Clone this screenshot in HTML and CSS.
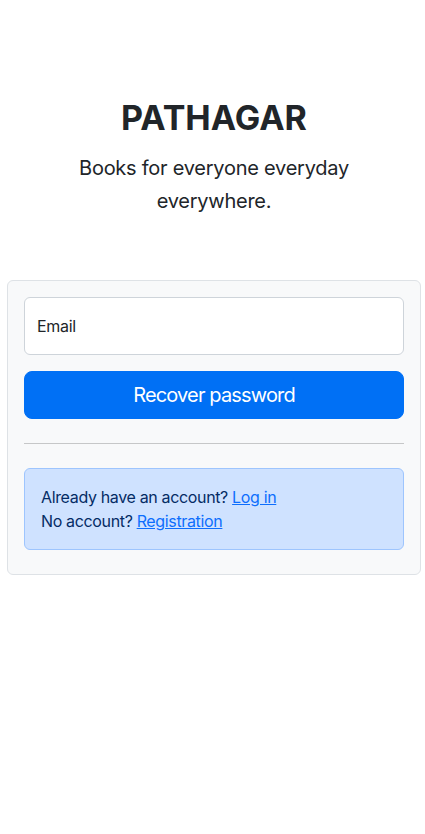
FILE: index.html
```html
<!DOCTYPE html>
<html lang="en">
<head>
<meta charset="utf-8">
<title>Pathagar</title>
<link rel="stylesheet" href="styles.css">
</head>
<body>
<main class="page">
  <header class="hero">
    <h1 class="brand">PATHAGAR</h1>
    <p class="lead">Books for everyone everyday everywhere.</p>
  </header>
  <section class="card">
    <form class="form">
      <label class="field">
        <input class="field-input" type="email" placeholder="Email">
      </label>
      <button class="btn" type="button">Recover password</button>
    </form>
    <hr class="divider">
    <div class="alert">
      <div>Already have an account? <a href="#" class="link">Log in</a></div>
      <div>No account? <a href="#" class="link">Registration</a></div>
    </div>
  </section>
</main>
</body>
</html>
```

FILE: styles.css
```css
* { box-sizing: border-box; }
html, body { margin: 0; padding: 0; background: #fff; }
body {
  font-family: Inter, "Noto Sans", "Liberation Sans", sans-serif;
  font-size: 16px;
  line-height: 1.5;
  color: #212529;
  letter-spacing: -0.35px;
}
.page {
  width: 414px;
  margin-left: 7px;
  padding-top: 98px;
}
.hero {
  text-align: center;
  padding: 0 60px;
}
.brand {
  margin: 0;
  font-size: 34px;
  font-weight: 700;
  line-height: 40px;
  letter-spacing: 0;
}
.lead {
  margin: 14px 0 0;
  font-size: 20px;
  line-height: 33px;
  letter-spacing: -0.25px;
}
.card {
  margin-top: 62px;
  background: #f8f9fa;
  border: 1px solid #dee2e6;
  border-radius: 6px;
  padding: 16px 16px 24px;
}
.form { display: flex; flex-direction: column; gap: 16px; }
.field { display: block; }
.field-input {
  display: block;
  width: 100%;
  height: 58px;
  padding: 0 12px;
  font-family: inherit;
  font-size: 16px;
  letter-spacing: -0.3px;
  color: #212529;
  background: #fff;
  border: 1px solid #ced4da;
  border-radius: 6px;
  outline: none;
}
.field-input::placeholder { color: #212529; opacity: 1; }
.btn {
  display: block;
  width: 100%;
  height: 48px;
  font-family: inherit;
  font-size: 20px;
  line-height: 30px;
  letter-spacing: -0.85px;
  color: #fff;
  background: #0070f5;
  border: 1px solid #0070f5;
  border-radius: 8px;
  cursor: pointer;
}
.divider {
  margin: 24px 0;
  border: 0;
  border-top: 1px solid #c6c7c8;
}
.alert {
  background: #cfe2ff;
  border: 1px solid #9ec5fe;
  border-radius: 6px;
  padding: 16px;
  color: #052c65;
  line-height: 24px;
}
.link { color: #0d6efd; text-decoration: underline; }
```
